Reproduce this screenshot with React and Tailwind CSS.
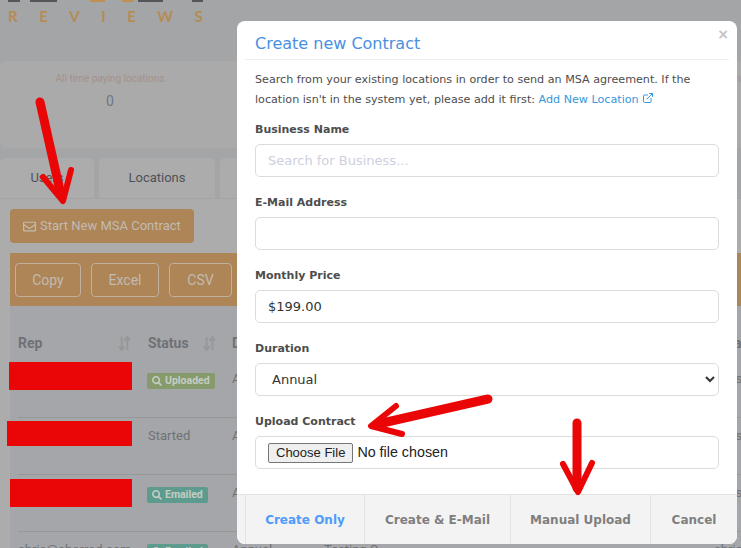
import React from 'react';
import { FaRegEnvelope, FaSearch } from 'react-icons/fa';
import { ExternalLink } from 'lucide-react';

function SortIcon() {
  return (
    <svg width="13" height="15" viewBox="0 0 14 16" fill="none" stroke="#97989a" strokeWidth="2.2">
      <path d="M4 1v13M1 11l3 4 3-4" />
      <path d="M10 15V2M7 5l3-4 3 4" />
    </svg>
  );
}

function Badge({ color, children }) {
  return (
    <span className={`flex w-fit items-center gap-[3px] h-[16px] mt-[4px] -ml-[1px] px-[5px] rounded-[2px] text-[10.5px] font-bold text-[#c5cdc4] ${color}`}>
      <FaSearch className="w-[10px] h-[10px]" />
      {children}
    </span>
  );
}

function Row({ status, name = '' }) {
  return (
    <div className="flex h-[57px] border-b border-[#979899] pt-[8px] text-[13px] leading-[20px] text-[#6f7276]">
      <div className="w-[130px] shrink-0 whitespace-nowrap">{name}</div>
      <div className="w-[84px] shrink-0">{status}</div>
      <div className="w-[92px] shrink-0">Annual</div>
      <div className="w-[390px] shrink-0">Testing C</div>
      <div className="whitespace-nowrap">chris@ahorred.com</div>
    </div>
  );
}

function Field({ label, children }) {
  return (
    <div className="mb-[15px]">
      <label className="block h-[20px] pt-[2px] mb-[5px] text-[11px] leading-[18px] font-bold text-[#4d4d4d]">{label}</label>
      {children}
    </div>
  );
}

const inputClass = 'block w-full h-[33px] px-3 rounded-[5px] border border-[#dcdcdc] bg-white text-[13px] text-[#333] placeholder:text-[#cdd0de]';

export default function App() {
  return (
    <div className="relative w-[741px] h-[548px] overflow-hidden bg-[#a4a5a7] font-['Roboto',sans-serif]">
      {/* Page behind the dialog */}
      <svg width="210" height="3" className="block">
        <rect x="8" width="12" height="2" fill="#56565a" />
        <rect x="30" width="27" height="2" fill="#56565a" />
        <rect x="90" width="15" height="2" fill="#bb9156" />
        <rect x="122" width="12" height="2" fill="#bb9156" />
        <rect x="138" width="25" height="2" fill="#56565a" />
        <rect x="192" width="11" height="2" fill="#56565a" />
      </svg>
      <div className="h-[58px] pl-[8px] pt-[5px] font-['Lato',sans-serif] text-[15px] leading-[16px] font-bold tracking-[21.5px] text-[#b58c55] whitespace-nowrap">
        REVIEWS
      </div>

      <div className="flex justify-between h-[87px] rounded-l-[6px] bg-[#aaaaaa]">
        <div className="w-[220px] pt-[12px] text-center">
          <div className="text-[10px] leading-[12px] text-[#a3918c]">All time paying locations</div>
          <div className="mt-[8px] text-[14px] leading-[16px] text-[#6a7785]">0</div>
        </div>
        <div className="pt-[12px] text-[10px] leading-[12px] text-[#a3918c] whitespace-nowrap">in</div>
      </div>

      <div className="flex gap-[5px] mt-[10px] h-[40px] text-[13px] text-[#4f5157]">
        <div className="w-[94px] rounded-t-[5px] bg-[#acacac] flex items-center justify-center">Users</div>
        <div className="w-[116px] rounded-t-[5px] bg-[#acacac] flex items-center justify-center">Locations</div>
        <div className="w-[300px] rounded-t-[5px] bg-[#acacac]"></div>
      </div>

      <div className="bg-[#acacac] border-t border-[#a3a3a3] pt-[10px] pl-[10px] h-[350px]">
        <button className="flex items-center gap-[4px] w-[184px] h-[34px] pl-[13px] rounded-[4px] bg-[#ad8557] text-[13px] text-[#c2bbb3]">
          <FaRegEnvelope className="w-[13px] h-[13px]" />
          Start New MSA Contract
        </button>

        <div className="flex gap-[10px] mt-[10px] h-[53px] pt-[10px] pl-[5px] bg-[#ad8557] text-[14px] text-[#c2bbb3]">
          <div className="w-[66px] h-[34px] rounded-[4px] border border-[#c0b09c] flex items-center justify-center">Copy</div>
          <div className="w-[68px] h-[34px] rounded-[4px] border border-[#c0b09c] flex items-center justify-center">Excel</div>
          <div className="w-[63px] h-[34px] rounded-[4px] border border-[#c0b09c] flex items-center justify-center">CSV</div>
        </div>

        <div className="bg-[#a5a6a9] h-[300px] pl-[8px] w-[800px]">
          <div className="flex items-center h-[55px] pt-[19px] text-[14px] font-bold text-[#6f7276]">
            <div className="w-[130px] shrink-0 flex items-center justify-between pr-[17px]">Rep <SortIcon /></div>
            <div className="w-[84px] shrink-0 flex items-center justify-between pr-[16px]">Status <SortIcon /></div>
            <div className="w-[482px] shrink-0">D</div>
            <div>Email</div>
          </div>
          <div className="w-[752px] -ml-[8px] pl-[8px]">
            <Row status={<Badge color="bg-[#869a6c]">Uploaded</Badge>} />
            <Row status="Started" />
            <Row status={<Badge color="bg-[#5e9b8f]">Emailed</Badge>} />
            <Row status={<Badge color="bg-[#5e9b8f]">Emailed</Badge>} name="chris@ahorred.com" />
          </div>
        </div>
      </div>

      {/* Dialog */}
      <div className="absolute left-[237px] top-[21px] w-[500px] h-[523px] flex flex-col rounded-[8px] bg-white font-['DejaVu_Sans',sans-serif]">
        <button className="absolute right-[8px] top-[6px] text-[14px] leading-[14px] font-bold text-[#c4c4c4]">×</button>
        <div className="mx-[8px] h-[39px] pl-[10px] pt-[12px] border-b border-[#eeeeee] text-[16px] leading-[21px] text-[#4a90e2]">
          Create new Contract
        </div>
        <div className="flex-1 px-[18px] pt-[10px]">
          <p className="text-[11.15px] leading-[20px] text-[#4d4d4d]">
            Search from your existing locations in order to send an MSA agreement. If the location isn't in the system yet, please add it first:{' '}
            <a className="text-[#3498db]">
              Add New Location <ExternalLink className="inline w-[12px] h-[12px] align-[-1px]" />
            </a>
          </p>
          <div className="mt-[9px]">
            <Field label="Business Name">
              <input className={inputClass} placeholder="Search for Business..." />
            </Field>
            <Field label="E-Mail Address">
              <input className={inputClass} />
            </Field>
            <Field label="Monthly Price">
              <input className={inputClass} defaultValue="$199.00" />
            </Field>
            <Field label="Duration">
              <select className={inputClass}>
                <option>Annual</option>
              </select>
            </Field>
            <Field label="Upload Contract">
              <input
                type="file"
                className="block w-full h-[33px] pl-[12px] pt-[6px] rounded-[5px] border border-[#dcdcdc] font-['Liberation_Sans',sans-serif] text-[14.3px] leading-[16px] text-[#222] file:h-[20px] file:px-[7px] file:mr-[4px] file:rounded-[2px] file:border file:border-[#767676] file:bg-[#efefef] file:text-[13px]"
              />
            </Field>
          </div>
        </div>
        <div className="flex h-[50px] pl-[8px] rounded-b-[8px] bg-[#f3f3f3] border-t border-[#e2e2e2] text-[12px] font-bold text-[#7f7f7f]">
          <button className="w-[119px] border-l border-[#e2e2e2] text-[#4e9bfb]">Create Only</button>
          <button className="w-[146px] border-l border-[#e2e2e2]">Create &amp; E-Mail</button>
          <button className="w-[140px] border-l border-[#e2e2e2]">Manual Upload</button>
          <button className="flex-1 border-l border-[#e2e2e2]">Cancel</button>
        </div>
      </div>

      {/* Red markup on top of the screenshot */}
      <div className="absolute left-[9px] top-[362px] w-[123px] h-[28px] bg-[#ea0606]"></div>
      <div className="absolute left-[7px] top-[421px] w-[125px] h-[25px] bg-[#ea0606]"></div>
      <div className="absolute left-[10px] top-[479px] w-[122px] h-[28px] bg-[#ea0606]"></div>
      <svg width="741" height="548" className="absolute left-0 top-0 pointer-events-none" fill="none" stroke="#ea0606" strokeLinecap="round" strokeLinejoin="round">
        <path d="M40 102L61 195" strokeWidth="9" />
        <path d="M43 177L63 201L71 170" strokeWidth="6" />
        <path d="M488 399L378 424" strokeWidth="9" />
        <path d="M396 406L371 426L402 434" strokeWidth="6" />
        <path d="M577 423L577 488" strokeWidth="9" />
        <path d="M563 464L578 492L592 463" strokeWidth="6" />
      </svg>
    </div>
  );
}
